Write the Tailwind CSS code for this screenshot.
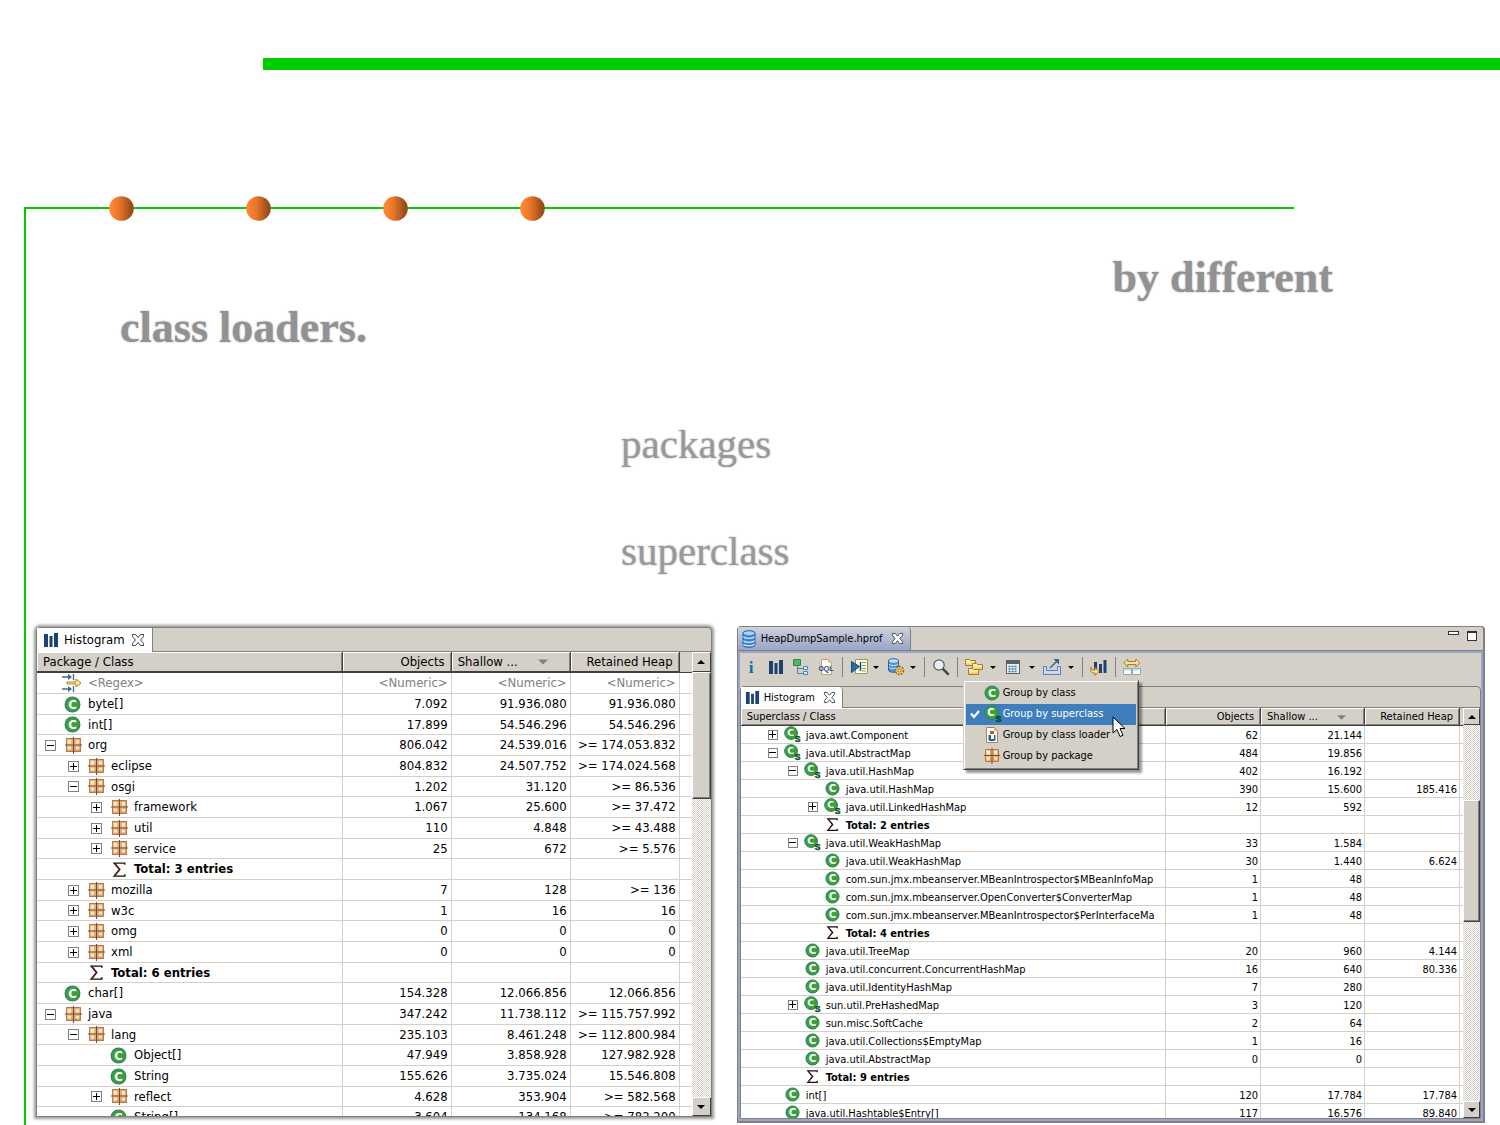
<!DOCTYPE html>
<html lang="en">
<head>
<meta charset="utf-8">
<title>Histogram grouping</title>
<script src="https://cdn.jsdelivr.net/npm/@tailwindcss/browser@4"></script>
</head>
<body class="bg-white text-black">

<!-- Gradients stay in a rendered svg: paint servers do not resolve from a display:none one -->
<svg class="absolute size-0" aria-hidden="true">
  <defs>
    <linearGradient id="sphere" x1="0" x2="1"><stop offset="0.1" stop-color="#ff8433"/><stop offset="0.4" stop-color="#e87729"/><stop offset="0.9" stop-color="#994b1b"/></linearGradient>
    <linearGradient id="gold" x1="0" x2="0" y1="0" y2="1"><stop offset="0" stop-color="#fffbe0"/><stop offset="1" stop-color="#f0c860"/></linearGradient>
    <linearGradient id="tan" x1="0" x2="1" y1="0" y2="1"><stop offset="0" stop-color="#f8dcae"/><stop offset="1" stop-color="#dca878"/></linearGradient>
  </defs>
</svg>
<svg class="hidden" aria-hidden="true">
  <symbol id="dot" viewBox="0 0 25 25"><circle cx="12.500" cy="12.500" r="12.300" fill="url(#sphere)"/></symbol>
  <symbol id="bars" viewBox="0 0 16 16"><path fill="#1f4273" d="M1 2h4v13H1zM6.500 4h3v11h-3zM11 1h4v14h-4z"/></symbol>
  <symbol id="close" viewBox="0 0 14 14"><path fill="#fff" stroke="#444" d="M1.500 1.500h3l2.500 3 2.500-3h3v2L9.500 7l3 3.500v2h-3L7 9.500l-2.500 3h-3v-2l3-3.500-3-3.500z"/></symbol>
  <symbol id="class" viewBox="0 0 16 16"><circle cx="8" cy="8" r="7" fill="#3a9f3e" stroke="#2f7d62"/><text x="8" y="12" font-size="11" font-weight="bold" text-anchor="middle" fill="#fff" font-family="DejaVu Sans">C</text></symbol>
  <symbol id="super" viewBox="0 0 18 18"><circle cx="7.500" cy="7.500" r="6.800" fill="#3a9f3e" stroke="#2f7d62"/><text x="7" y="11" font-size="10" font-weight="bold" text-anchor="middle" fill="#fff" font-family="DejaVu Sans">C</text><text x="14.500" y="17" font-size="9" font-weight="bold" text-anchor="middle" fill="#0a4a1c" stroke="#0a4a1c" stroke-width="0.500" font-family="Liberation Sans">S</text></symbol>
  <symbol id="package" viewBox="0 0 16 16"><path fill="url(#tan)" stroke="#b9744c" d="M1.500 1.500h13v12h-13z"/><path fill="#fbefb4" d="M3 3h3v3H3zM10 3h3v3h-3zM3 9.500h3v2H3zM10 9.500h3v2h-3z"/><path stroke="#7d4632" d="M8 0v16M0 7.500h16"/><path fill="none" stroke="#b9744c" d="M6.500 2v11M9.500 2v11" opacity="0.500"/></symbol>
  <symbol id="total" viewBox="0 0 16 16"><path fill="none" stroke="#111" stroke-width="1.300" d="M13 3.500V2H3l5 6-5 6.200h10v-1.700"/><path fill="none" stroke="#7a1818" d="M4 2.500l4.500 5.500L4 13.500"/></symbol>
  <symbol id="regex" viewBox="0 0 20 20"><path stroke="#44688f" stroke-width="1.300" d="M0 4h9M0 16h9M11.500 1v6M11.500 13v6"/><path fill="#44688f" d="M6 1l4 3-4 3zM6 13l4 3-4 3z"/><path fill="#ffeb9c" stroke="#b58316" d="M5 9h9V6l5 4-5 4v-3H5z"/></symbol>
  <symbol id="db" viewBox="0 0 16 18"><path fill="#3b86d0" stroke="#1c5da4" d="M2 3c0-3 12-3 12 0v12c0 3-12 3-12 0z"/><ellipse cx="8" cy="3.200" rx="5.500" ry="2" fill="#a9d2f4"/><path fill="none" stroke="#d3eaff" stroke-width="1.200" d="M2.500 6.500c1 2.400 10 2.400 11 0M2.500 10.500c1 2.400 10 2.400 11 0M2.500 14c1 2.400 10 2.400 11 0"/></symbol>
  <symbol id="info" viewBox="0 0 18 18"><text x="9" y="15" font-size="17" font-weight="bold" text-anchor="middle" fill="#1766a8" font-family="Liberation Serif">i</text></symbol>
  <symbol id="tree" viewBox="0 0 18 18"><path fill="none" stroke="#6a7d96" d="M5.500 8v7.500H11M5.500 10.500H11"/><path fill="#53b373" stroke="#2c8a50" d="M1.500 1.500h7v6h-7z"/><path fill="#d5ecfa" stroke="#4a88ba" d="M11.500 8.500h4v3h-4zM11.500 13.500h4v3h-4z"/></symbol>
  <symbol id="oql" viewBox="0 0 18 18"><path fill="#fff" stroke="#b7a468" d="M4.500 1.500h7l3 3v12h-10z"/><path fill="#e8c777" d="M11 1l4 4h-4z"/><text x="9" y="13" font-size="7" font-weight="bold" text-anchor="middle" fill="#27447d" font-family="Liberation Sans">OQL</text></symbol>
  <symbol id="run" viewBox="0 0 18 18"><path fill="#fffde8" stroke="#8d9b5a" d="M5.500 1.500h12v14h-12z"/><path stroke="#7fa060" d="M12 4.500h4M12 7.500h4M12 10.500h4M12 13h4"/><path fill="#2c6e9e" stroke="#164a78" d="M1.500 3.500l8 5-8 6z"/><path stroke="#164a78" stroke-width="1.500" d="M10.500 4v9"/></symbol>
  <symbol id="dbgear" viewBox="0 0 18 18"><path fill="#4b93d6" stroke="#2465a8" d="M1.500 3c0-3 10-3 10 0v9c0 3-10 3-10 0z"/><ellipse cx="6.500" cy="3" rx="4.500" ry="1.700" fill="#c3e0f8"/><path fill="none" stroke="#d3eaff" d="M2 6c1 2 8 2 9 0M2 9c1 2 8 2 9 0"/><circle cx="12.500" cy="12.500" r="4" fill="#f5d06c" stroke="#9b6215" stroke-width="1.500" stroke-dasharray="2 1"/><circle cx="12.500" cy="12.500" r="1.500" fill="#fff" stroke="#9b6215"/></symbol>
  <symbol id="find" viewBox="0 0 18 18"><path stroke="#4a4a4a" stroke-width="2.500" stroke-linecap="round" d="M11 11l5 5"/><circle cx="7" cy="7" r="5.200" fill="#e9eef0" stroke="#5a5a5a" stroke-width="1.200"/></symbol>
  <symbol id="group" viewBox="0 0 18 18"><g fill="url(#gold)" stroke="#a87c1c"><path d="M.5 1.500h4l1 1h5v5H.5z"/><path d="M7.500 5.500h4l1 1h5v5h-10z"/><path d="M3.500 10.500h4l1 1h5v5h-10z"/></g></symbol>
  <symbol id="calc" viewBox="0 0 18 18"><path fill="#e7f1f5" stroke="#56616a" d="M2.500 2.500h13v13h-13z"/><path fill="#56616a" d="M2 2h14v4H2z"/><path stroke="#3a78a0" stroke-width="1.500" stroke-dasharray="2 1" d="M4.500 8.500h9M4.500 11h9M4.500 13.500h9"/></symbol>
  <symbol id="export" viewBox="0 0 18 18"><path fill="#c9daf0" stroke="#5f7fb4" d="M.5 8.500h3v4h11v-4h3v8H.5z"/><path fill="none" stroke="#2b639c" stroke-width="1.400" d="M7 10l7-7"/><path fill="#2b639c" d="M10.500 1H16v5.500z"/></symbol>
  <symbol id="barsarrow" viewBox="0 0 18 18"><path fill="#1f4273" d="M4 4h3v9H4zM9 6h3v9H9zM13.500 2h3v13h-3z"/><path fill="#ffe08a" stroke="#a8761a" d="M1 9c0 3 1 3 4 3V9.500l4 4-4 4V15c-4 0-5-2-4-6z"/></symbol>
  <symbol id="expand" viewBox="0 0 18 18"><path fill="url(#gold)" stroke="#a87c1c" d="M.8 5l4-4v2.500h8V1l4 4-4 4V6.500h-8V9z"/><path fill="#fff" stroke="#93a8b4" d="M.5 10.500h8v6h-8zM9.500 10.500h8v6h-8z"/><path fill="#cfe5ef" d="M1 11h7v2H1zM10 11h7v2h-7z"/></symbol>
  <symbol id="loader" viewBox="0 0 16 16"><path fill="#fff" stroke="#9a8a5a" d="M2.500.5h8l3 3v12h-11z"/><path fill="#e3b964" d="M10 0l4 4h-4z"/><path fill="#2b5d94" d="M4.500 8h7v5c0 1.500-7 1.500-7 0z"/><path fill="#c7572a" d="M6 4h4v3H6z"/><path fill="#fff" d="M7 8h3v4H7z"/></symbol>
  <symbol id="up" viewBox="0 0 8 8"><path d="M0 6h8L4 2z"/></symbol>
  <symbol id="down" viewBox="0 0 8 8"><path d="M0 2h8L4 6z"/></symbol>
  <symbol id="drop" viewBox="0 0 8 8"><path d="M1 3h6L4 6z"/></symbol>
  <symbol id="tick" viewBox="0 0 10 10"><path fill="none" stroke="#fff" stroke-width="2.200" d="M1 4.500l3 3.500L9 2"/></symbol>
</svg>

<div class="flex min-h-screen flex-col pt-[58px]">
  <div class="ml-[263px] h-3 bg-[#00cc00]"></div>

  <main class="mt-[137px] ml-6 grow border-l-2 border-[#00cc00] pr-[15px] pb-[2px]">
    <div class="mr-[191px] h-[2px] bg-[#00cc00]"></div>
    <div class="-mt-[13px] flex gap-28 pl-[83px]">
      <svg class="size-[25px]"><use href="#dot"/></svg>
      <svg class="size-[25px]"><use href="#dot"/></svg>
      <svg class="size-[25px]"><use href="#dot"/></svg>
      <svg class="size-[25px]"><use href="#dot"/></svg>
    </div>

    <div class="pl-[94px] font-['Liberation_Serif',serif] text-[41px] leading-[50px] text-[#999] [text-shadow:0_0_2px_#aaa]">
      <p class="mt-8 text-[44px] font-bold text-[#929292]">
        <span class="block pr-[152px] text-right">by different</span>
        <span class="block">class loaders.</span>
      </p>
      <p class="mt-[66px] pl-[501px]">packages</p>
      <p class="mt-[57px] pl-[501px]">superclass</p>
    </div>

    <div class="mt-[50px] flex items-start gap-[25px] pl-[10px] font-['DejaVu_Sans_Condensed','DejaVu_Sans',sans-serif]">

      <section class="mt-px min-w-0 flex-[676] rounded-t-sm border border-[#808080] bg-[#d4d0c8] text-[13px] leading-4 shadow-[0_0_3px_2px_#999]">
        <div class="flex h-6 border-b border-[#808080]">
          <button class="-mb-px flex items-center gap-[5px] border-r border-[#808080] bg-white pr-[7px] pl-[6px]">
            <svg class="size-4"><use href="#bars"/></svg>Histogram<svg class="ml-px size-[14px]"><use href="#close"/></svg>
          </button>
        </div>
        <div class="flex h-[464px] overflow-hidden">
          <div class="min-w-0 grow overflow-hidden bg-white">
            <table class="w-full table-fixed border-separate border-spacing-0">
              <colgroup><col><col class="w-[109px]"><col class="w-[119px]"><col class="w-[109px]"><col class="w-3"></colgroup>
              <thead id="package-head"></thead>
              <tbody id="package-rows"></tbody>
            </table>
          </div>
          <div class="flex w-[19px] shrink-0 flex-col bg-[repeating-conic-gradient(#d4d0c8_0_25%,#fff_0_50%)] bg-[length:2px_2px]">
            <button aria-label="Scroll up" class="grid h-5 place-items-center border border-t-white border-r-[#404040] border-b-[#404040] border-l-white bg-[#d4d0c8]"><svg class="size-2"><use href="#up"/></svg></button>
            <div class="h-[127px] border border-t-white border-r-[#404040] border-b-[#404040] border-l-white bg-[#d4d0c8] shadow-[inset_-1px_-1px_0_#808080]"></div>
            <button aria-label="Scroll down" class="mt-auto grid h-[19px] place-items-center border border-t-white border-r-[#404040] border-b-[#404040] border-l-white bg-[#d4d0c8]"><svg class="size-2"><use href="#down"/></svg></button>
          </div>
        </div>
      </section>

      <section class="min-w-0 flex-[748] rounded-t-sm border-t border-r-2 border-b-2 border-l border-[#808080] bg-[#d4d0c8] text-[11px] leading-[14px]">
        <div class="flex h-6 items-start border-b border-[#808080]">
          <button class="flex h-[23px] items-center gap-1 rounded-tr-sm border-r border-[#808080] bg-linear-to-b from-[#d0d3dc] to-[#99a5c8] pr-[6px] pl-[3px]">
            <svg class="h-[18px] w-4"><use href="#db"/></svg>HeapDumpSample.hprof<svg class="ml-1 size-[13px]"><use href="#close"/></svg>
          </button>
          <div class="ml-auto flex items-start gap-2 pt-1 pr-[6px]">
            <button aria-label="Minimize" class="h-1 w-[11px] border border-[#333] bg-white"></button>
            <button aria-label="Maximize" class="h-[10px] w-[10px] border border-t-2 border-[#333] bg-white"></button>
          </div>
        </div>
        <div class="border-2 border-[#9aa5c8]">
          <div class="flex h-[33px] items-center gap-[7px] pr-1 pb-[6px] pl-[2px]">
            <button aria-label="Overview"><svg class="size-[18px]"><use href="#info"/></svg></button>
            <button aria-label="Histogram" class="p-px"><svg class="size-4"><use href="#bars"/></svg></button>
            <button aria-label="Dominator tree"><svg class="size-[18px]"><use href="#tree"/></svg></button>
            <button aria-label="Query"><svg class="size-[18px]"><use href="#oql"/></svg></button>
            <span class="h-5 w-px bg-[#808080]"></span>
            <button aria-label="Run report" class="flex items-center gap-1"><svg class="size-[18px]"><use href="#run"/></svg><svg class="size-2"><use href="#drop"/></svg></button>
            <button aria-label="Query browser" class="flex items-center gap-1"><svg class="size-[18px]"><use href="#dbgear"/></svg><svg class="size-2"><use href="#drop"/></svg></button>
            <span class="h-5 w-px bg-[#808080]"></span>
            <button aria-label="Find"><svg class="size-[18px]"><use href="#find"/></svg></button>
            <span class="h-5 w-px bg-[#808080]"></span>
            <div class="relative">
              <button aria-label="Group result" class="flex items-center gap-[6px]"><svg class="size-[18px]"><use href="#group"/></svg><svg class="size-2"><use href="#drop"/></svg></button>
              <div role="menu" class="absolute top-full -left-[2px] z-10 mt-1 w-44 border border-t-[#d4d0c8] border-r-[#404040] border-b-[#404040] border-l-[#d4d0c8] bg-[#d4d0c8] p-[2px] shadow-[inset_1px_1px_0_#fff,inset_-1px_-1px_0_#808080,3px_3px_2px_#0006]">
                <button role="menuitem" class="flex h-[21px] w-full items-center pl-[18px]"><svg class="mr-[3px] size-4"><use href="#class"/></svg>Group by class</button>
                <button role="menuitem" class="flex h-[21px] w-full items-center bg-[#3f7ebc] pl-1 text-white"><svg class="mr-1 size-[10px]"><use href="#tick"/></svg><svg class="mr-px size-[18px]"><use href="#super"/></svg>Group by superclass</button>
                <button role="menuitem" class="flex h-[21px] w-full items-center pl-[18px]"><svg class="mr-[3px] size-4"><use href="#loader"/></svg>Group by class loader</button>
                <button role="menuitem" class="flex h-[21px] w-full items-center pl-[18px]"><svg class="mr-[3px] size-4"><use href="#package"/></svg>Group by package</button>
                <svg class="absolute top-[35px] left-[148px] h-[22px] w-[14px]" viewBox="0 0 14 22"><path fill="#fff" stroke="#000" d="M1 1v16l4-3.500 3 7 3-1.300-3-6.700h5z"/></svg>
              </div>
            </div>
            <button aria-label="Calculate retained size" class="flex items-center gap-[6px]"><svg class="size-[18px]"><use href="#calc"/></svg><svg class="size-2"><use href="#drop"/></svg></button>
            <button aria-label="Export" class="flex items-center gap-[6px]"><svg class="size-[18px]"><use href="#export"/></svg><svg class="size-2"><use href="#drop"/></svg></button>
            <span class="h-5 w-px bg-[#808080]"></span>
            <button aria-label="Compare"><svg class="size-[18px]"><use href="#barsarrow"/></svg></button>
            <span class="h-5 w-px bg-[#808080]"></span>
            <button aria-label="Fit columns"><svg class="size-[18px]"><use href="#expand"/></svg></button>
          </div>
          <div class="rounded-t-sm border border-[#808080]">
            <div class="flex h-[21px] border-b border-[#808080]">
              <button class="-mb-px flex items-center gap-1 rounded-tr-sm border-r border-[#808080] bg-white pr-[6px] pl-1">
                <svg class="size-[15px]"><use href="#bars"/></svg>Histogram<svg class="ml-1 size-[13px]"><use href="#close"/></svg>
              </button>
            </div>
            <div class="flex h-[410px] overflow-hidden">
              <div class="min-w-0 grow overflow-hidden bg-white">
                <table class="w-full table-fixed border-separate border-spacing-0">
                  <colgroup><col><col class="w-[95px]"><col class="w-[104px]"><col class="w-[95px]"><col class="w-[3px]"></colgroup>
                  <thead id="super-head"></thead>
                  <tbody id="super-rows"></tbody>
                </table>
              </div>
              <div class="flex w-[17px] shrink-0 flex-col bg-[repeating-conic-gradient(#d4d0c8_0_25%,#fff_0_50%)] bg-[length:2px_2px]">
                <button aria-label="Scroll up" class="grid h-[17px] place-items-center border border-t-white border-r-[#404040] border-b-[#404040] border-l-white bg-[#d4d0c8]"><svg class="size-2"><use href="#up"/></svg></button>
                <div class="mt-[75px] h-[122px] border border-t-white border-r-[#404040] border-b-[#404040] border-l-white bg-[#d4d0c8] shadow-[inset_-1px_-1px_0_#808080]"></div>
                <button aria-label="Scroll down" class="mt-auto grid h-[17px] place-items-center border border-t-white border-r-[#404040] border-b-[#404040] border-l-white bg-[#d4d0c8]"><svg class="size-2"><use href="#down"/></svg></button>
              </div>
            </div>
          </div>
        </div>
      </section>
    </div>
  </main>
</div>

<script>
// Row: [level, expander ('+', '-', or ''), icon, label, objects, shallow heap, retained heap]
const packageRows = [
  [0, '', 'regex', '<Regex>', '<Numeric>', '<Numeric>', '<Numeric>'],
  [0, '', 'class', 'byte[]', '7.092', '91.936.080', '91.936.080'],
  [0, '', 'class', 'int[]', '17.899', '54.546.296', '54.546.296'],
  [0, '-', 'package', 'org', '806.042', '24.539.016', '>= 174.053.832'],
  [1, '+', 'package', 'eclipse', '804.832', '24.507.752', '>= 174.024.568'],
  [1, '-', 'package', 'osgi', '1.202', '31.120', '>= 86.536'],
  [2, '+', 'package', 'framework', '1.067', '25.600', '>= 37.472'],
  [2, '+', 'package', 'util', '110', '4.848', '>= 43.488'],
  [2, '+', 'package', 'service', '25', '672', '>= 5.576'],
  [2, '', 'total', 'Total: 3 entries', '', '', ''],
  [1, '+', 'package', 'mozilla', '7', '128', '>= 136'],
  [1, '+', 'package', 'w3c', '1', '16', '16'],
  [1, '+', 'package', 'omg', '0', '0', '0'],
  [1, '+', 'package', 'xml', '0', '0', '0'],
  [1, '', 'total', 'Total: 6 entries', '', '', ''],
  [0, '', 'class', 'char[]', '154.328', '12.066.856', '12.066.856'],
  [0, '-', 'package', 'java', '347.242', '11.738.112', '>= 115.757.992'],
  [1, '-', 'package', 'lang', '235.103', '8.461.248', '>= 112.800.984'],
  [2, '', 'class', 'Object[]', '47.949', '3.858.928', '127.982.928'],
  [2, '', 'class', 'String', '155.626', '3.735.024', '15.546.808'],
  [2, '+', 'package', 'reflect', '4.628', '353.904', '>= 582.568'],
  [2, '', 'class', 'String[]', '3.604', '134.168', '>= 782.200'],
];
const superRows = [
  [0, '+', 'super', 'java.awt.Component', '62', '21.144', ''],
  [0, '-', 'super', 'java.util.AbstractMap', '484', '19.856', ''],
  [1, '-', 'super', 'java.util.HashMap', '402', '16.192', ''],
  [2, '', 'class', 'java.util.HashMap', '390', '15.600', '185.416'],
  [2, '+', 'super', 'java.util.LinkedHashMap', '12', '592', ''],
  [2, '', 'total', 'Total: 2 entries', '', '', ''],
  [1, '-', 'super', 'java.util.WeakHashMap', '33', '1.584', ''],
  [2, '', 'class', 'java.util.WeakHashMap', '30', '1.440', '6.624'],
  [2, '', 'class', 'com.sun.jmx.mbeanserver.MBeanIntrospector$MBeanInfoMap', '1', '48', ''],
  [2, '', 'class', 'com.sun.jmx.mbeanserver.OpenConverter$ConverterMap', '1', '48', ''],
  [2, '', 'class', 'com.sun.jmx.mbeanserver.MBeanIntrospector$PerInterfaceMa', '1', '48', ''],
  [2, '', 'total', 'Total: 4 entries', '', '', ''],
  [1, '', 'class', 'java.util.TreeMap', '20', '960', '4.144'],
  [1, '', 'class', 'java.util.concurrent.ConcurrentHashMap', '16', '640', '80.336'],
  [1, '', 'class', 'java.util.IdentityHashMap', '7', '280', ''],
  [1, '+', 'super', 'sun.util.PreHashedMap', '3', '120', ''],
  [1, '', 'class', 'sun.misc.SoftCache', '2', '64', ''],
  [1, '', 'class', 'java.util.Collections$EmptyMap', '1', '16', ''],
  [1, '', 'class', 'java.util.AbstractMap', '0', '0', ''],
  [1, '', 'total', 'Total: 9 entries', '', '', ''],
  [0, '', 'class', 'int[]', '120', '17.784', '17.784'],
  [0, '', 'class', 'java.util.Hashtable$Entry[]', '117', '16.576', '89.840'],
];

const styles = {
  package: {
    first: 'Package / Class', base: 8, step: 23,
    headRow: 'h-[21px]',
    head: 'border-r border-b-2 border-[#404040] bg-[#d4d0c8] px-[6px] font-normal shadow-[inset_1px_1px_0_#fff,inset_-1px_0_0_#808080]',
    row: 'h-[21px] nth-[3n]:h-5',
    cell: 'border-r border-b border-[#d4d0c8] pr-[3px] text-right whitespace-nowrap',
    tree: 'flex h-[18px] items-center overflow-hidden',
    label: '',
    box: 'grid size-[11px] shrink-0 place-items-center border border-[#808080]',
    blank: 'size-[11px] shrink-0',
    icons: { class: 'mr-[7px] ml-2 size-[17px] shrink-0', package: 'mr-[6px] ml-[9px] size-[17px] shrink-0', total: 'mr-[6px] ml-[9px] size-[17px] shrink-0', regex: 'mr-[6px] ml-[6px] size-5 shrink-0' },
    arrow: 'mr-4 size-[10px] fill-[#808080]',
  },
  super: {
    first: 'Superclass / Class', base: 27, step: 20,
    headRow: 'h-[18px]',
    head: 'border-r border-b border-[#404040] bg-[#d4d0c8] px-[6px] pt-px font-normal shadow-[inset_1px_1px_0_#fff,inset_-1px_-1px_0_#808080]',
    row: 'h-[18px]',
    cell: 'border-r border-b border-[#d4d0c8] pt-[2px] pr-[2px] text-right whitespace-nowrap',
    tree: 'flex h-[17px] items-center overflow-hidden',
    label: 'pt-[2px]',
    box: 'grid size-[10px] shrink-0 place-items-center border border-[#808080]',
    blank: 'size-[10px] shrink-0',
    icons: { class: 'mr-[6px] ml-[7px] size-[15px] shrink-0', super: 'mr-[5px] ml-[6px] size-[17px] shrink-0', total: 'mr-[6px] ml-[7px] size-[15px] shrink-0' },
    arrow: 'mr-3 size-[9px] fill-[#808080]',
  },
};

const esc = s => s.replace(/</g, '&lt;').replace(/>/g, '&gt;');
const plus = '<svg class="size-[7px]" viewBox="0 0 7 7"><path stroke="#000" d="M0 3.500h7M3.500 0v7"/></svg>';
const minus = '<svg class="size-[7px]" viewBox="0 0 7 7"><path stroke="#000" d="M0 3.500h7"/></svg>';

function fill(name, rows) {
  const s = styles[name];
  document.getElementById(name + '-head').innerHTML = `<tr class="${s.headRow}">
    <th class="${s.head} text-left">${s.first}</th>
    <th class="${s.head} text-right">Objects</th>
    <th class="${s.head}"><span class="flex items-center justify-between whitespace-nowrap">Shallow ...<svg class="${s.arrow}"><use href="#down"/></svg></span></th>
    <th class="${s.head} text-right whitespace-nowrap">Retained Heap</th>
    <td class="border-b border-[#404040] bg-[#d4d0c8]"></td></tr>`;
  document.getElementById(name + '-rows').innerHTML = rows.map(([level, mark, icon, label, ...nums]) => {
    const tone = icon === 'regex' ? 'text-[#808080]' : '';
    const weight = icon === 'total' ? 'font-bold' : '';
    const box = mark
      ? `<button aria-label="${mark === '+' ? 'Expand' : 'Collapse'}" class="${s.box}">${mark === '+' ? plus : minus}</button>`
      : `<span class="${s.blank}"></span>`;
    return `<tr class="${s.row} ${tone}">
      <td class="border-r border-b border-[#d4d0c8] whitespace-nowrap"><div class="${s.tree}" style="padding-left:${s.base + level * s.step}px">${box}<svg class="${s.icons[icon]}"><use href="#${icon}"/></svg><span class="${s.label} ${weight}">${esc(label)}</span></div></td>
      ${nums.map(n => `<td class="${s.cell}">${esc(n)}</td>`).join('')}
      <td class="border-b border-[#d4d0c8]"></td></tr>`;
  }).join('');
}
fill('package', packageRows);
fill('super', superRows);
</script>
</body>
</html>
